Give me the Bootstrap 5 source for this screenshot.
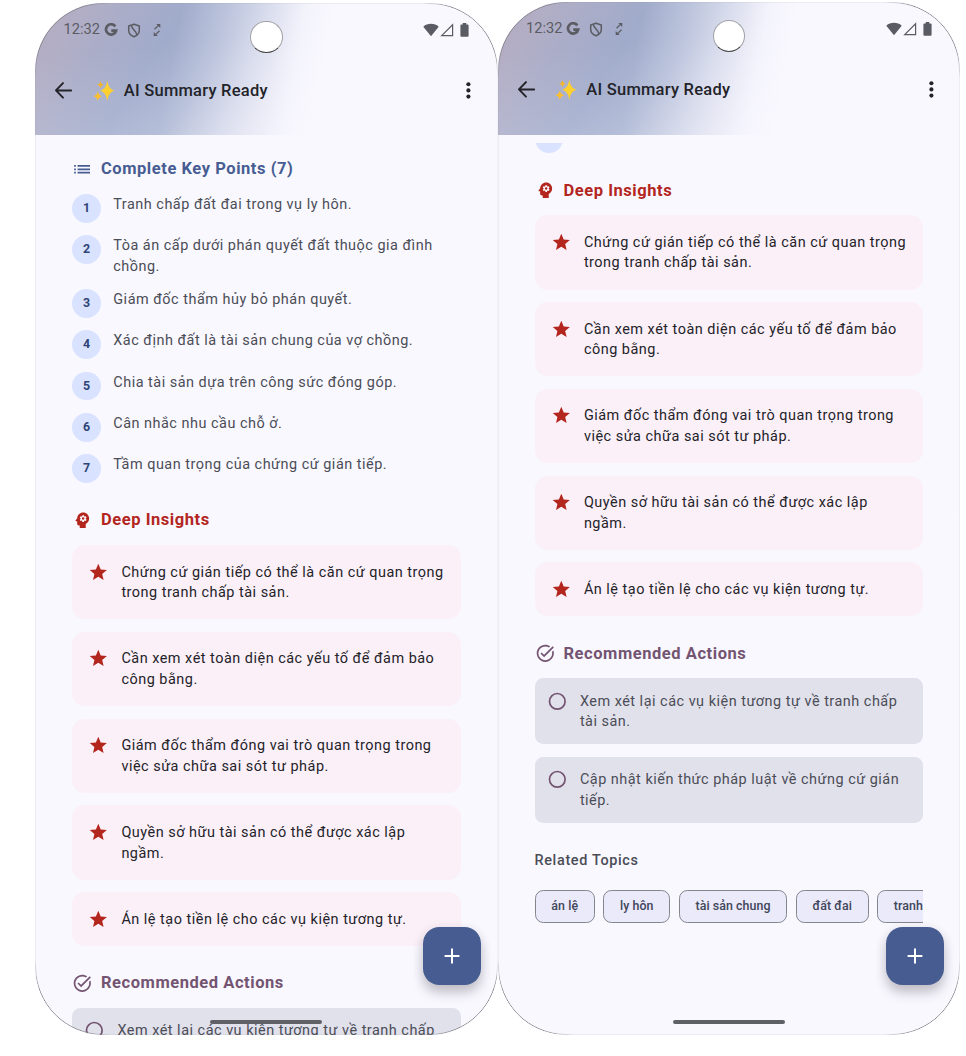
<!DOCTYPE html>
<html lang="vi">
<head>
<meta charset="utf-8">
<meta name="viewport" content="width=device-width, initial-scale=1">
<title>AI Summary Ready</title>
<link href="https://cdn.jsdelivr.net/npm/bootstrap@5.3.0/dist/css/bootstrap.min.css" rel="stylesheet">
<style>
body{background:#fff;font-family:Roboto,"Noto Sans",sans-serif;height:1056px;overflow:hidden;color:#232329}
.screens{padding-left:35px}
.phone{width:462.5px;height:1032px;margin-top:3px;background:#f9f8ff;border-radius:68px;overflow:hidden}
.phone.second{height:1033px;margin-top:2px}
.phone::after{content:"";position:absolute;inset:0;border:1px solid #85858a;border-radius:68px;pointer-events:none;
-webkit-mask:radial-gradient(circle at 15px 15px,#000 32px,rgba(0,0,0,.1) 62px) 0 0/50% 50% no-repeat,radial-gradient(circle at calc(100% - 15px) 15px,#000 32px,rgba(0,0,0,.1) 62px) 100% 0/50% 50% no-repeat,radial-gradient(circle at 15px calc(100% - 15px),#000 32px,rgba(0,0,0,.1) 62px) 0 100%/50% 50% no-repeat,radial-gradient(circle at calc(100% - 15px) calc(100% - 15px),#000 32px,rgba(0,0,0,.1) 62px) 100% 100%/50% 50% no-repeat}
.topbar{height:132px;flex:none;background:
linear-gradient(100deg,rgba(249,248,255,0) 30%,rgba(249,248,255,.28) 40%,rgba(249,248,255,.66) 51%,rgba(249,248,255,.9) 56%,#f9f8ff 62%),
linear-gradient(175deg,rgba(249,248,255,0) 30%,rgba(249,248,255,.22) 100%),
linear-gradient(124deg,#b7abbf 0,#b1aec6 10%,#a0abcb 28%,#a9b4d2 40%,#c6cce2 54%,#e4e6f2 70%)}
.second .topbar{height:132.500px}
.statusbar{height:54px;padding:0 28.500px;font-size:14.6px;color:#5b5c63}
.toolbar{height:67px;padding:0 16.500px 0 16px}
.toolbar h1{font-size:16.5px;letter-spacing:.24px;margin:0 0 0 9px;font-weight:500;line-height:25px}
.camera{position:absolute;left:215px;top:17.500px;width:32.5px;height:32.5px;border-radius:50%;background:#fff;border:1px solid #a0a0a6;border-bottom-color:#444}
.content{padding:21.700px 37px 0}
.second .content{padding-top:8.800px}
.section-head{height:24.8px;gap:8.4px;font-size:16.5px;font-weight:700;letter-spacing:.55px;margin-bottom:12.4px}
.section-head span{padding-top:1px}
.section-head svg{width:20.6px;height:20.6px;flex:none}
.c-blue{color:#475d92}.c-red{color:#b3261e}.c-plum{color:#735471}
.stack{display:flex;flex-direction:column;gap:12.4px;margin-bottom:24.9px}
.body-text{font-size:14.45px;line-height:20.7px;letter-spacing:.5px;white-space:nowrap;padding-top:1px;margin-bottom:-1px}
.point{gap:12.4px;color:#4b4d56}
.num{width:28.9px;height:28.9px;flex:none;border-radius:50%;background:#d9e2ff;color:#2f4578;font-size:12.4px;font-weight:700}
.peek{height:9.4px;overflow:hidden;margin-bottom:25.400px}
.insight{background:#fbf0f8;border-radius:12.4px;padding:16.5px 16px;gap:12.8px}
.action{background:#e1e1ec;border-radius:8.3px;padding:12.4px;gap:12.4px;color:#4b4d56}
.insight svg,.action svg{width:20.6px;height:20.6px;flex:none}
.topics-title{font-size:14.45px;font-weight:500;letter-spacing:.65px;line-height:24.8px;color:#4b4d56;padding-top:1.300px;margin-bottom:15.6px}
.chips{gap:8.3px;overflow:hidden}
.chip{height:33px;flex:none;border:1px solid #84868e;border-radius:8.3px;background:#eaeafb;color:#414659;font-size:12.4px;font-weight:500;letter-spacing:.07px;padding:1px 15.8px 0}
.fab{position:absolute;right:16.5px;bottom:50px;width:58px;height:58px;border:0;border-radius:16.5px;background:#475d92;color:#fff;box-shadow:0 8px 12px rgba(40,35,45,.24),0 1px 12px rgba(40,35,45,.08);padding:0}
.homebar{position:absolute;left:175px;bottom:11px;width:112px;height:4.2px;border-radius:3px;background:#606166}
</style>
</head>
<body>
<svg width="0" height="0" class="position-absolute" aria-hidden="true">
<symbol id="star" viewBox="0 0 24 24"><path fill="currentColor" d="M12 17.27 18.18 21l-1.64-7.03L22 9.24l-7.19-.61L12 2 9.19 8.63 2 9.24l5.46 4.73L5.82 21z"/></symbol>
<symbol id="ring" viewBox="0 0 24 24"><circle cx="12" cy="12" r="9.1" fill="none" stroke="currentColor" stroke-width="2"/></symbol>
<symbol id="list" viewBox="0 0 24 24"><path fill="currentColor" d="M2.500 11h2v2h-2zm0 4h2v2h-2zm0-8h2v2h-2zm4 4H21v2H6.500zm0 4H21v2H6.500zM6.500 7H21v2H6.500z"/></symbol>
<symbol id="mind" viewBox="0 0 24 24"><path fill="currentColor" d="M13 8.57c-.79 0-1.43.64-1.43 1.43s.64 1.43 1.43 1.43 1.43-.64 1.43-1.43-.64-1.43-1.43-1.43z"/><path fill="currentColor" d="M13 3C9.25 3 6.2 5.94 6.02 9.64L4.1 12.2c-.25.33-.01.8.4.8H6v3c0 1.100.9 2 2 2h1v3h7v-4.680c2.360-1.120 4-3.530 4-6.320 0-3.870-3.130-7-7-7zm3 7c0 .13-.01.26-.02.39l.83.66c.080.060.1.160.050.25l-.8 1.390c-.050.090-.160.120-.240.090l-.990-.4c-.210.160-.430.290-.670.390L14 13.830c-.010.1-.1.170-.2.170h-1.600c-.1 0-.180-.070-.2-.170l-.15-1.060c-.250-.1-.470-.230-.680-.390l-.990.4c-.090.030-.2 0-.250-.090l-.8-1.390c-.050-.080-.030-.190.050-.250l.840-.660c-.010-.130-.020-.260-.020-.390s.020-.270.040-.390l-.850-.660c-.080-.060-.1-.160-.050-.260l.8-1.380c.050-.090.150-.120.240-.090l1 .4c.2-.150.430-.290.670-.390L12 6.170c.020-.1.1-.170.2-.170h1.600c.1 0 .180.070.2.170l.150 1.060c.240.1.460.230.670.390l1-.4c.090-.030.2 0 .240.090l.8 1.380c.050.090.030.2-.050.260l-.850.660c.030.120.040.250.040.390z"/></symbol>
<symbol id="task" viewBox="0 0 24 24"><path fill="currentColor" d="M22 5.180 10.590 16.600l-4.240-4.240 1.410-1.410 2.830 2.830 10-10L22 5.180zm-2.210 5.040c.130.570.210 1.170.210 1.780 0 4.420-3.580 8-8 8s-8-3.580-8-8 3.580-8 8-8c1.580 0 3.040.460 4.280 1.250l1.440-1.440C16.100 2.670 14.130 2 12 2 6.480 2 2 6.480 2 12s4.480 10 10 10 10-4.480 10-10c0-1.190-.220-2.330-.600-3.390l-1.610 1.610z"/></symbol>
<symbol id="g" viewBox="0 0 14 14"><path fill="none" stroke="currentColor" stroke-width="2.700" d="M11.300 3.350A5.150 5.150 0 1 0 12.150 7.600H7.300"/></symbol>
<symbol id="shield" viewBox="0 0 14 15"><path fill="none" stroke="currentColor" stroke-width="1.500" stroke-linejoin="round" d="M7 1.200 12.300 3v4.200c0 3-2 5.300-5.300 6.500-3.300-1.200-5.300-3.500-5.300-6.500V3zM4.300 2.300C4.500 6 9.300 7.500 9.800 11.800"/></symbol>
<symbol id="sync" viewBox="0 0 8 14"><path fill="none" stroke="currentColor" stroke-width="1.300" d="M1.500 6.200 5.500 2.400M6.500 7.800 2.500 11.600"/><path fill="currentColor" d="M3.300.9h4v4zM.7 9.100v4h4z"/></symbol>
<symbol id="wifi" viewBox="0 0 16 14"><path fill="currentColor" d="M.3 3.700C2.400 1.700 5 .8 8 .8s5.600.9 7.700 2.900L8 13.300z"/></symbol>
<symbol id="signal" viewBox="0 0 14 14"><path fill="none" stroke="currentColor" stroke-width="1.200" d="M1.700 12.700 12.600 1.800v10.900z"/></symbol>
<symbol id="battery" viewBox="0 0 9 14"><path fill="currentColor" d="M2.700 0h3.600v1.400h1.300q1 0 1 1v10.400q0 .9-1 .9H1.400q-1 0-1-.9V2.400q0-1 1-1h1.300z"/></symbol>
<symbol id="back" viewBox="0 0 24 24"><path fill="none" stroke="currentColor" stroke-width="1.900" stroke-linecap="round" stroke-linejoin="round" d="M19.500 12H5M11.600 5 4.800 12l6.800 7"/></symbol>
<symbol id="dots" viewBox="0 0 24 24"><g fill="currentColor"><circle cx="12" cy="6" r="2"/><circle cx="12" cy="12" r="2"/><circle cx="12" cy="18" r="2"/></g></symbol>
<symbol id="sparkles" viewBox="0 0 22 22"><path fill="#fdd02f" d="M14.300.6c1 5.800 2.600 8.900 7.400 10.200-4.800 1.300-6.400 4.400-7.400 10.200-1-5.800-2.600-8.900-7.400-10.200C11.700 9.500 13.300 6.400 14.300.6z"/><path fill="#fdbf2d" d="M4.800 11.300c.7 2.900 1.700 4.200 4.300 4.900-2.600.7-3.600 2-4.300 4.900-.7-2.900-1.700-4.200-4.300-4.900 2.600-.7 3.600-2 4.300-4.900z"/><path fill="#f4b42d" d="M7.500.9c.6 2.300 1.300 3.200 3.400 3.800C8.800 5.300 8.100 6.200 7.500 8.500 6.900 6.200 6.200 5.300 4.100 4.700 6.200 4.100 6.900 3.200 7.500.9z"/></symbol>
</svg>

<main class="screens d-flex align-items-start">
<section class="phone position-relative d-flex flex-column">
  <header class="topbar">
    <div class="statusbar d-flex align-items-center"><span>12:32</span>
      <svg width="14" height="14" style="margin-left:4px"><use href="#g"/></svg><svg width="14" height="15" style="margin-left:9px"><use href="#shield"/></svg><svg width="8" height="14" style="margin-left:12px"><use href="#sync"/></svg>
      <svg width="16" height="14" class="ms-auto"><use href="#wifi"/></svg><svg width="14" height="14" style="margin-left:1px"><use href="#signal"/></svg><svg width="9" height="14" style="margin-left:6px"><use href="#battery"/></svg>
    </div>
    <div class="toolbar d-flex align-items-center"><svg width="24.8" height="24.8"><use href="#back"/></svg><svg width="22" height="22" style="margin-left:17px"><use href="#sparkles"/></svg><h1>AI Summary Ready</h1><svg class="ms-auto" width="24.8" height="24.8"><use href="#dots"/></svg></div>
  </header>
  <div class="camera"></div>
  <div class="content">
    <div class="section-head c-blue d-flex align-items-center"><svg><use href="#list"/></svg><span>Complete Key Points (7)</span></div>
    <div class="stack">
      <div class="point d-flex"><span class="num d-flex align-items-center justify-content-center">1</span><span class="body-text">Tranh chấp đất đai trong vụ ly hôn.</span></div>
      <div class="point d-flex"><span class="num d-flex align-items-center justify-content-center">2</span><span class="body-text">Tòa án cấp dưới phán quyết đất thuộc gia đình<br>chồng.</span></div>
      <div class="point d-flex"><span class="num d-flex align-items-center justify-content-center">3</span><span class="body-text">Giám đốc thẩm hủy bỏ phán quyết.</span></div>
      <div class="point d-flex"><span class="num d-flex align-items-center justify-content-center">4</span><span class="body-text">Xác định đất là tài sản chung của vợ chồng.</span></div>
      <div class="point d-flex"><span class="num d-flex align-items-center justify-content-center">5</span><span class="body-text">Chia tài sản dựa trên công sức đóng góp.</span></div>
      <div class="point d-flex"><span class="num d-flex align-items-center justify-content-center">6</span><span class="body-text">Cân nhắc nhu cầu chỗ ở.</span></div>
      <div class="point d-flex"><span class="num d-flex align-items-center justify-content-center">7</span><span class="body-text">Tầm quan trọng của chứng cứ gián tiếp.</span></div>
    </div>
    <div class="section-head c-red d-flex align-items-center"><svg><use href="#mind"/></svg><span>Deep Insights</span></div>
    <div class="stack">
      <div class="insight d-flex"><svg class="c-red"><use href="#star"/></svg><span class="body-text">Chứng cứ gián tiếp có thể là căn cứ quan trọng<br>trong tranh chấp tài sản.</span></div>
      <div class="insight d-flex"><svg class="c-red"><use href="#star"/></svg><span class="body-text">Cần xem xét toàn diện các yếu tố để đảm bảo<br>công bằng.</span></div>
      <div class="insight d-flex"><svg class="c-red"><use href="#star"/></svg><span class="body-text">Giám đốc thẩm đóng vai trò quan trọng trong<br>việc sửa chữa sai sót tư pháp.</span></div>
      <div class="insight d-flex"><svg class="c-red"><use href="#star"/></svg><span class="body-text">Quyền sở hữu tài sản có thể được xác lập<br>ngầm.</span></div>
      <div class="insight d-flex"><svg class="c-red"><use href="#star"/></svg><span class="body-text">Án lệ tạo tiền lệ cho các vụ kiện tương tự.</span></div>
    </div>
    <div class="section-head c-plum d-flex align-items-center"><svg><use href="#task"/></svg><span>Recommended Actions</span></div>
    <div class="action d-flex"><svg class="c-plum"><use href="#ring"/></svg><span class="body-text">Xem xét lại các vụ kiện tương tự về tranh chấp</span></div>
  </div>
  <button class="fab d-flex align-items-center justify-content-center" aria-label="Add"><svg width="16" height="16"><path d="M8 .6v14.800M.6 8h14.800" stroke="#fff" stroke-width="2"/></svg></button>
  <div class="homebar"></div>
</section>

<section class="phone second position-relative d-flex flex-column">
  <header class="topbar">
    <div class="statusbar d-flex align-items-center"><span>12:32</span>
      <svg width="14" height="14" style="margin-left:4px"><use href="#g"/></svg><svg width="14" height="15" style="margin-left:9px"><use href="#shield"/></svg><svg width="8" height="14" style="margin-left:12px"><use href="#sync"/></svg>
      <svg width="16" height="14" class="ms-auto"><use href="#wifi"/></svg><svg width="14" height="14" style="margin-left:1px"><use href="#signal"/></svg><svg width="9" height="14" style="margin-left:6px"><use href="#battery"/></svg>
    </div>
    <div class="toolbar d-flex align-items-center"><svg width="24.8" height="24.8"><use href="#back"/></svg><svg width="22" height="22" style="margin-left:17px"><use href="#sparkles"/></svg><h1>AI Summary Ready</h1><svg class="ms-auto" width="24.8" height="24.8"><use href="#dots"/></svg></div>
  </header>
  <div class="camera"></div>
  <div class="content">
    <div class="peek d-flex align-items-end"><span class="num"></span></div>
    <div class="section-head c-red d-flex align-items-center"><svg><use href="#mind"/></svg><span>Deep Insights</span></div>
    <div class="stack">
      <div class="insight d-flex"><svg class="c-red"><use href="#star"/></svg><span class="body-text">Chứng cứ gián tiếp có thể là căn cứ quan trọng<br>trong tranh chấp tài sản.</span></div>
      <div class="insight d-flex"><svg class="c-red"><use href="#star"/></svg><span class="body-text">Cần xem xét toàn diện các yếu tố để đảm bảo<br>công bằng.</span></div>
      <div class="insight d-flex"><svg class="c-red"><use href="#star"/></svg><span class="body-text">Giám đốc thẩm đóng vai trò quan trọng trong<br>việc sửa chữa sai sót tư pháp.</span></div>
      <div class="insight d-flex"><svg class="c-red"><use href="#star"/></svg><span class="body-text">Quyền sở hữu tài sản có thể được xác lập<br>ngầm.</span></div>
      <div class="insight d-flex"><svg class="c-red"><use href="#star"/></svg><span class="body-text">Án lệ tạo tiền lệ cho các vụ kiện tương tự.</span></div>
    </div>
    <div class="section-head c-plum d-flex align-items-center"><svg><use href="#task"/></svg><span>Recommended Actions</span></div>
    <div class="stack">
      <div class="action d-flex"><svg class="c-plum"><use href="#ring"/></svg><span class="body-text">Xem xét lại các vụ kiện tương tự về tranh chấp<br>tài sản.</span></div>
      <div class="action d-flex"><svg class="c-plum"><use href="#ring"/></svg><span class="body-text">Cập nhật kiến thức pháp luật về chứng cứ gián<br>tiếp.</span></div>
    </div>
    <div class="topics-title">Related Topics</div>
    <div class="chips d-flex">
      <span class="chip d-flex align-items-center">án lệ</span><span class="chip d-flex align-items-center">ly hôn</span><span class="chip d-flex align-items-center">tài sản chung</span><span class="chip d-flex align-items-center">đất đai</span><span class="chip d-flex align-items-center">tranh</span>
    </div>
  </div>
  <button class="fab d-flex align-items-center justify-content-center" aria-label="Add"><svg width="16" height="16"><path d="M8 .6v14.800M.6 8h14.800" stroke="#fff" stroke-width="2"/></svg></button>
  <div class="homebar"></div>
</section>
</main>
<script src="https://cdn.jsdelivr.net/npm/bootstrap@5.3.0/dist/js/bootstrap.bundle.min.js"></script>
</body>
</html>
